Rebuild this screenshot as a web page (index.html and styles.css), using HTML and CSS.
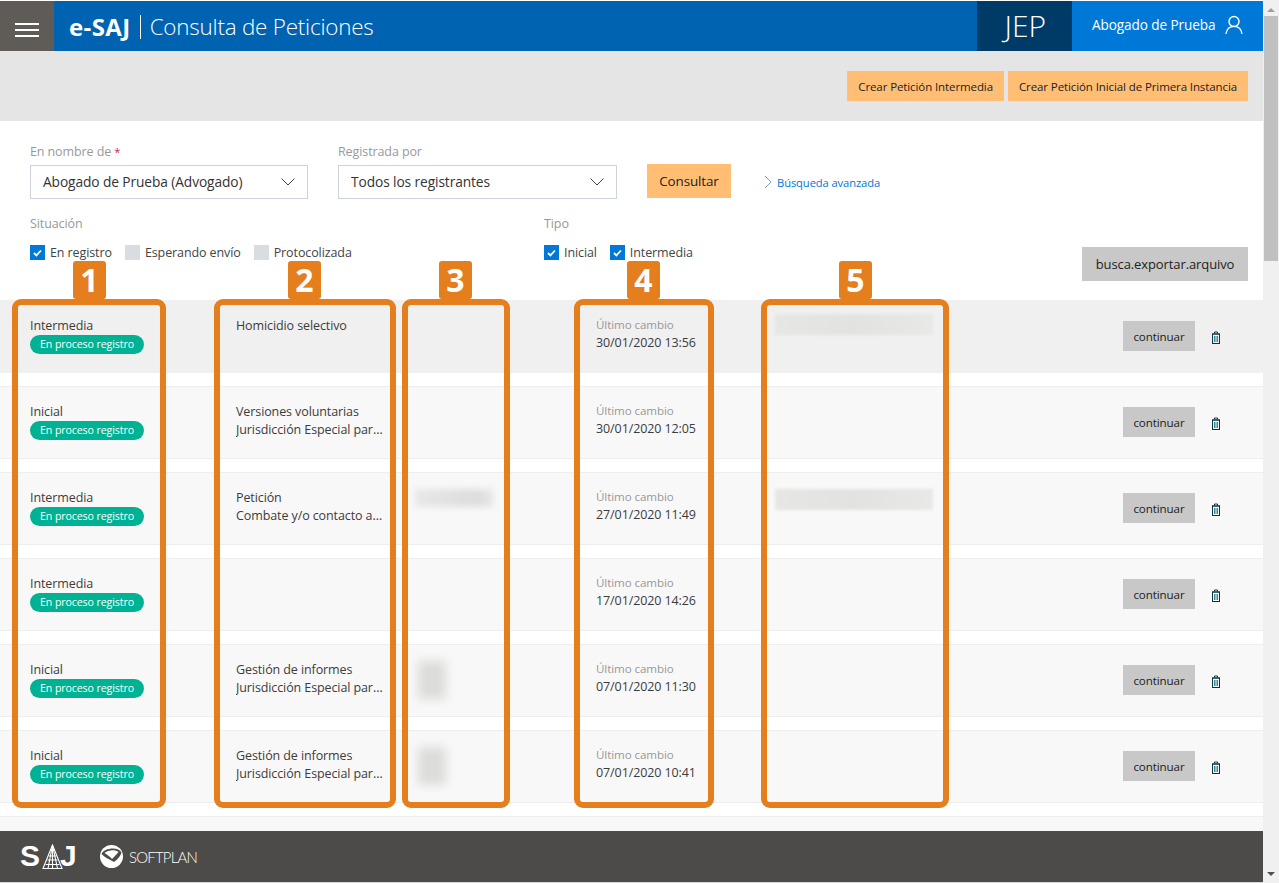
FILE: index.html
```html
<!DOCTYPE html>
<html lang="es">
<head>
<meta charset="utf-8">
<title>e-SAJ | Consulta de Peticiones</title>
<link rel="stylesheet" href="styles.css">
</head>
<body>
<div class="app">
  <div class="page">
    <header class="header">
      <button class="menu" aria-label="Menú"><span></span><span></span><span></span></button>
      <h1 class="title"><b>e-SAJ</b><i class="sep"></i>Consulta de Peticiones</h1>
      <div class="jep">JEP</div>
      <div class="user">Abogado de Prueba
        <svg width="18" height="20" viewBox="0 0 18 20" fill="none" stroke="#fff" stroke-width="1.4"><circle cx="9" cy="6.5" r="5"/><path d="M1 19c.6-4.6 3.6-7.6 8-7.6s7.4 3 8 7.6"/></svg>
      </div>
    </header>

    <div class="toolbar">
      <button class="btn-orange btn-small">Crear Petición Intermedia</button>
      <button class="btn-orange btn-small">Crear Petición Inicial de Primera Instancia</button>
    </div>

    <section class="filters">
      <div class="filter-top">
        <div class="field field-a">
          <label class="label">En nombre de <em>*</em></label>
          <div class="select">Abogado de Prueba (Advogado)
            <svg width="14" height="8" viewBox="0 0 14 8" fill="none" stroke="#444" stroke-width="1"><path d="M.5.5 7 7 13.5.5"/></svg>
          </div>
        </div>
        <div class="field field-b">
          <label class="label">Registrada por</label>
          <div class="select">Todos los registrantes
            <svg width="14" height="8" viewBox="0 0 14 8" fill="none" stroke="#444" stroke-width="1"><path d="M.5.5 7 7 13.5.5"/></svg>
          </div>
        </div>
        <button class="btn-orange btn-query">Consultar</button>
        <a class="advanced" href="#">
          <svg width="8" height="14" viewBox="0 0 8 14" fill="none" stroke="#7f9fe0" stroke-width="1"><path d="M1 1l6 6-6 6"/></svg>
          Búsqueda avanzada
        </a>
      </div>
      <div class="filter-bottom">
        <div class="group group-sit">
          <div class="label">Situación</div>
          <div class="checks">
            <span class="check"><span class="box on"><svg width="9" height="8" viewBox="0 0 9 8" fill="none" stroke="#fff" stroke-width="1.8"><path d="M1 4l2.4 2.4L8 1.5"/></svg></span>En registro</span>
            <span class="check"><span class="box"></span>Esperando envío</span>
            <span class="check"><span class="box"></span>Protocolizada</span>
          </div>
        </div>
        <div class="group group-tipo">
          <div class="label">Tipo</div>
          <div class="checks">
            <span class="check"><span class="box on"><svg width="9" height="8" viewBox="0 0 9 8" fill="none" stroke="#fff" stroke-width="1.8"><path d="M1 4l2.4 2.4L8 1.5"/></svg></span>Inicial</span>
            <span class="check"><span class="box on"><svg width="9" height="8" viewBox="0 0 9 8" fill="none" stroke="#fff" stroke-width="1.8"><path d="M1 4l2.4 2.4L8 1.5"/></svg></span>Intermedia</span>
          </div>
        </div>
        <button class="btn-gray btn-export">busca.exportar.arquivo</button>
      </div>
    </section>

    <main class="list">
      <article class="row row-active">
        <div class="cell"><div>Intermedia</div><span class="pill">En proceso registro</span></div>
        <div class="cell cell-subject"><div>Homicidio selectivo</div></div>
        <div class="cell"></div>
        <div class="cell"><div class="muted">Último cambio</div><div>30/01/2020 13:56</div></div>
        <div class="cell"><div class="blur blur-wide blur-top"></div></div>
        <div class="actions"><button class="btn-gray btn-go">continuar</button><svg class="trash" width="10" height="13" viewBox="0 0 10 13" fill="none"><path d="M1 3h8M3.500 2.500V1h3v1.500" stroke="#17323f"/><rect x="1.500" y="3" width="7" height="9.500" stroke="#17323f"/><path d="M3.500 5v6M5 5v6M6.500 5v6" stroke="#2a8fa0"/></svg></div>
      </article>
      <article class="row">
        <div class="cell"><div>Inicial</div><span class="pill">En proceso registro</span></div>
        <div class="cell cell-subject"><div>Versiones voluntarias</div><div class="clip">Jurisdicción Especial para la Paz</div></div>
        <div class="cell"></div>
        <div class="cell"><div class="muted">Último cambio</div><div>30/01/2020 12:05</div></div>
        <div class="cell"></div>
        <div class="actions"><button class="btn-gray btn-go">continuar</button><svg class="trash" width="10" height="13" viewBox="0 0 10 13" fill="none"><path d="M1 3h8M3.500 2.500V1h3v1.500" stroke="#17323f"/><rect x="1.500" y="3" width="7" height="9.500" stroke="#17323f"/><path d="M3.500 5v6M5 5v6M6.500 5v6" stroke="#2a8fa0"/></svg></div>
      </article>
      <article class="row">
        <div class="cell"><div>Intermedia</div><span class="pill">En proceso registro</span></div>
        <div class="cell cell-subject"><div>Petición</div><div class="clip">Combate y/o contacto armado</div></div>
        <div class="cell"><div class="blur blur-mid"></div></div>
        <div class="cell"><div class="muted">Último cambio</div><div>27/01/2020 11:49</div></div>
        <div class="cell"><div class="blur blur-wide"></div></div>
        <div class="actions"><button class="btn-gray btn-go">continuar</button><svg class="trash" width="10" height="13" viewBox="0 0 10 13" fill="none"><path d="M1 3h8M3.500 2.500V1h3v1.500" stroke="#17323f"/><rect x="1.500" y="3" width="7" height="9.500" stroke="#17323f"/><path d="M3.500 5v6M5 5v6M6.500 5v6" stroke="#2a8fa0"/></svg></div>
      </article>
      <article class="row">
        <div class="cell"><div>Intermedia</div><span class="pill">En proceso registro</span></div>
        <div class="cell cell-subject"></div>
        <div class="cell"></div>
        <div class="cell"><div class="muted">Último cambio</div><div>17/01/2020 14:26</div></div>
        <div class="cell"></div>
        <div class="actions"><button class="btn-gray btn-go">continuar</button><svg class="trash" width="10" height="13" viewBox="0 0 10 13" fill="none"><path d="M1 3h8M3.500 2.500V1h3v1.500" stroke="#17323f"/><rect x="1.500" y="3" width="7" height="9.500" stroke="#17323f"/><path d="M3.500 5v6M5 5v6M6.500 5v6" stroke="#2a8fa0"/></svg></div>
      </article>
      <article class="row">
        <div class="cell"><div>Inicial</div><span class="pill">En proceso registro</span></div>
        <div class="cell cell-subject"><div>Gestión de informes</div><div class="clip">Jurisdicción Especial para la Paz</div></div>
        <div class="cell"><div class="blur blur-tall"></div></div>
        <div class="cell"><div class="muted">Último cambio</div><div>07/01/2020 11:30</div></div>
        <div class="cell"></div>
        <div class="actions"><button class="btn-gray btn-go">continuar</button><svg class="trash" width="10" height="13" viewBox="0 0 10 13" fill="none"><path d="M1 3h8M3.500 2.500V1h3v1.500" stroke="#17323f"/><rect x="1.500" y="3" width="7" height="9.500" stroke="#17323f"/><path d="M3.500 5v6M5 5v6M6.500 5v6" stroke="#2a8fa0"/></svg></div>
      </article>
      <article class="row">
        <div class="cell"><div>Inicial</div><span class="pill">En proceso registro</span></div>
        <div class="cell cell-subject"><div>Gestión de informes</div><div class="clip">Jurisdicción Especial para la Paz</div></div>
        <div class="cell"><div class="blur blur-tall"></div></div>
        <div class="cell"><div class="muted">Último cambio</div><div>07/01/2020 10:41</div></div>
        <div class="cell"></div>
        <div class="actions"><button class="btn-gray btn-go">continuar</button><svg class="trash" width="10" height="13" viewBox="0 0 10 13" fill="none"><path d="M1 3h8M3.500 2.500V1h3v1.500" stroke="#17323f"/><rect x="1.500" y="3" width="7" height="9.500" stroke="#17323f"/><path d="M3.500 5v6M5 5v6M6.500 5v6" stroke="#2a8fa0"/></svg></div>
      </article>
      <article class="row"></article>
    </main>

    <footer class="footer">
      <div class="logo-saj">
        <span>S</span>
        <svg width="21" height="25" viewBox="0 0 21 25" fill="none" stroke="#fff" stroke-width="1.100"><path d="M10.500 1 1 24.500h19z"/><path d="M10.500 1v23.500M10.500 1 6 24.500M10.500 1l5 23.500M7 12h7M5.500 16h10M3.500 20.500h14"/></svg>
        <span class="saj-j">J</span>
      </div>
      <div class="logo-soft">
        <svg width="25" height="25" viewBox="0 0 25 25" fill="none"><circle cx="12.500" cy="12.500" r="11.500" fill="#fff"/><path d="M2.500 10c2-6 17-8 20-1.500-1 4-4 7-7.500 9.500C10 15.500 5.500 13 2.500 10z" fill="#4d4b49"/><path d="M5.500 9c4-3.500 11-3.500 14-1-2 2.500-4 4.500-6.500 7-2-2.500-5-4.500-7.500-6z" fill="#fff"/></svg>
        <span>SOFTPLAN</span>
      </div>
    </footer>
    <div class="page-edge"></div>

    <div class="note note-1"><span class="tag tag-1">1</span></div>
    <div class="note note-2"><span class="tag tag-2">2</span></div>
    <div class="note note-3"><span class="tag tag-3">3</span></div>
    <div class="note note-4"><span class="tag tag-4">4</span></div>
    <div class="note note-5"><span class="tag tag-5">5</span></div>
  </div>

  <aside class="scrollbar">
    <i class="arrow arrow-up"></i>
    <div class="thumb"></div>
    <i class="arrow arrow-down"></i>
  </aside>
</div>
</body>
</html>
```
FILE: styles.css
```css
* { box-sizing: border-box; }
html, body { margin: 0; height: 100%; overflow: hidden; }
body {
  font-family: "Open Sans", "Noto Sans", "Liberation Sans", sans-serif;
  font-size: 12.5px;
  letter-spacing: -0.1px;
  color: #333;
  background: #fff;
}
button { font: inherit; letter-spacing: inherit; border: 0; color: #222; padding: 0; }

.app { display: flex; width: 1279px; height: 883px; }
.page { position: relative; width: 1263px; height: 883px; display: flex; flex-direction: column; padding-top: 1px; background: #fff; }

/* Header */
.header { display: flex; height: 50px; background: #0063b1; color: #fff; flex: none; }
.menu { width: 54px; background: #5f5b57; display: flex; flex-direction: column; justify-content: center; align-items: center; gap: 4px; padding-top: 8px; }
.menu span { display: block; width: 24px; height: 2px; background: #fff; }
.title { flex: 1; margin: 0; padding: 2px 0 0 15px; font-size: 22.4px; font-weight: 300; line-height: 48px; letter-spacing: -0.2px; display: flex; align-items: center; }
.title b { font-weight: 700; font-size: 24px; letter-spacing: 0.4px; }
.sep { display: block; width: 1px; height: 24px; background: #fff; margin: 0 9px 0 9px; }
.jep { width: 95px; background: #003a66; font-size: 30px; font-weight: 300; text-align: right; padding-right: 26px; line-height: 50px; letter-spacing: 0; }
.user { width: 191px; background: #0078d7; font-size: 13.6px; padding-left: 20px; display: flex; align-items: center; gap: 10px; padding-bottom: 3px; }

/* Toolbar */
.toolbar { flex: none; height: 70px; background: #e5e5e5; display: flex; justify-content: flex-end; align-items: flex-start; gap: 4px; padding: 20px 15px 0 0; }
.btn-orange { background: #ffbe73; }
.btn-gray { background: #c8c8c8; }
.btn-small { height: 30px; padding: 0 11px; font-size: 11.5px; }

/* Filters */
.filters { flex: none; height: 179px; padding: 22px 15px 0 30px; }
.filter-top { display: flex; align-items: flex-end; }
.field { display: flex; flex-direction: column; }
.field-a { width: 278px; margin-right: 30px; }
.field-b { width: 279px; margin-right: 30px; }
.label { color: #999; font-size: 12.5px; line-height: 18px; }
.label em { color: #d0175f; font-style: normal; font-size: 11px; }
.field .label { margin-bottom: 4px; }
.select { height: 34px; border: 1px solid #ccd3dc; background: #fff; color: #333; font-size: 13.75px; padding: 0 12px 2px; display: flex; align-items: center; justify-content: space-between; }
.select svg { margin-top: 2px; }
.btn-query { width: 84px; height: 34px; font-size: 13.4px; margin-bottom: 1px; }
.advanced { display: flex; align-items: center; gap: 5px; margin-left: 33px; height: 34px; color: #0078d7; font-size: 11.2px; text-decoration: none; }

.filter-bottom { display: flex; align-items: flex-start; margin-top: 16px; }
.group-sit { width: 514px; }
.group-tipo { flex: 1; }
.group .label { margin-bottom: 12px; }
.checks { display: flex; gap: 13px; }
.check { display: flex; align-items: center; gap: 5px; height: 15px; line-height: 18px; color: #444; }
.box { width: 15px; height: 15px; background: #d9dde2; display: flex; align-items: center; justify-content: center; flex: none; }
.box.on { background: #0078d7; }
.btn-export { width: 166px; height: 34px; font-size: 13px; margin-top: 32px; }

/* List */
.list { flex: 1; min-height: 0; overflow: hidden; display: flex; flex-direction: column; gap: 13px; }
.row { flex: none; height: 73px; display: grid; grid-template-columns: 206px 179px 181px 179px 1fr auto; padding: 16px 15px 0 30px; background: #f8f8f8; border-top: 1px solid #eee; border-bottom: 1px solid #eee; line-height: 18px; color: #3c3c3c; }
.row-active { background: #f0f0f0; border: 0; padding-top: 17px; }
.row > .cell { min-width: 0; }
.muted { color: #999; font-size: 11.6px; margin-top: -1px; }
.clip { width: 148px; white-space: nowrap; overflow: hidden; text-overflow: ellipsis; }
.pill { display: block; width: 114px; height: 19px; border-radius: 10px; background: #00b294; color: #fff; font-size: 10.6px; line-height: 19px; text-align: center; }
.actions { display: flex; align-items: flex-start; gap: 16px; width: 125px; }
.btn-go { width: 72px; height: 30px; font-size: 11.6px; margin-top: 4px; padding-top: 1px; }
.trash { margin-top: 14px; }
.blur { background: #dcdcdb; filter: blur(3px); }
.blur-wide { width: 158px; height: 21px; filter: blur(1.500px); background: linear-gradient(90deg, #e6e6e4, #e2e3e1 50%, #e8e8e6); }
.blur-top { margin-top: -3px; }
.blur-mid { width: 78px; height: 18px; background: linear-gradient(90deg, #e8e8e8, #dfdfdf 60%, #dcdedc 80%, #e6e6e6); }
.blur-tall { width: 28px; height: 38px; filter: blur(5px); margin-left: 3px; }

/* Footer */
.footer { flex: none; height: 51px; background: #4d4b49; display: flex; align-items: center; gap: 24px; padding-left: 20px; color: #fff; }
.logo-saj { display: flex; align-items: flex-end; font-family: "Liberation Sans", sans-serif; font-size: 30px; font-weight: 700; line-height: 26px; letter-spacing: 0; width: 55px; padding-bottom: 2px; }
.logo-saj svg { margin-left: 2px; flex: none; }
.saj-j { margin-left: -3px; }
.logo-soft { display: flex; align-items: center; gap: 5px; font-family: Lato, sans-serif; font-size: 15px; font-weight: 300; letter-spacing: -0.8px; }
.page-edge { flex: none; height: 1px; background: #d8d8d8; }

/* Numbered callouts */
.note { position: absolute; top: 299px; height: 509px; border: 6px solid #e57e1c; border-radius: 9px; }
.note-1 { left: 12px; width: 154px; }
.note-2 { left: 214px; width: 182px; }
.note-3 { left: 402px; width: 108px; }
.note-4 { left: 574px; width: 140px; }
.note-5 { left: 761px; width: 188px; }
.tag { position: absolute; top: -44px; width: 33px; height: 38px; border-radius: 3px; background: #e57e1c; color: #fff; font-size: 32px; font-weight: 700; line-height: 38px; text-align: center; letter-spacing: 0; }
.tag-1 { left: 55px; }
.tag-2 { left: 68px; }
.tag-3 { left: 31px; }
.tag-4 { left: 47px; }
.tag-5 { left: 72px; }

/* Scrollbar */
.scrollbar { width: 16px; height: 883px; background: #f0f0f0; display: flex; flex-direction: column; align-items: center; position: relative; }
.thumb { width: 14px; height: 245px; background: #c0c0c0; margin-top: 4px; }
.arrow { display: block; width: 0; height: 0; border-left: 4px solid transparent; border-right: 4px solid transparent; }
.arrow-up { border-bottom: 4px solid #a0a0a0; margin-top: 8px; }
.arrow-down { border-top: 4px solid #505050; margin-top: auto; margin-bottom: 7px; }
```
